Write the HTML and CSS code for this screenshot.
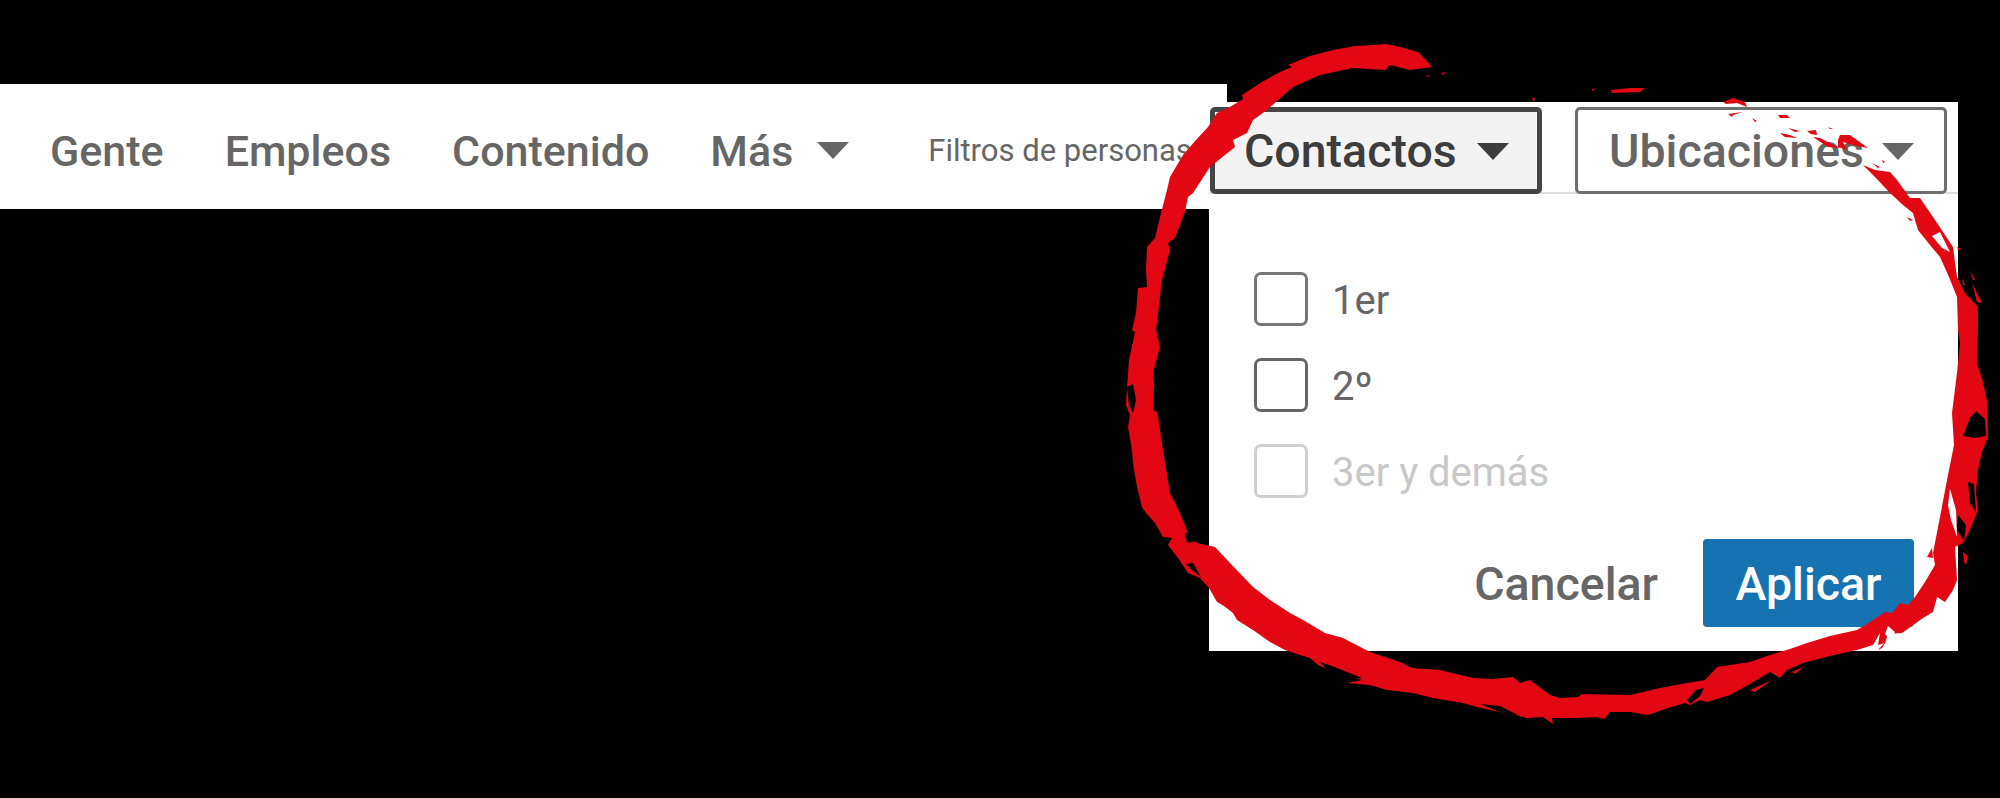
FILE: index.html
```html
<!DOCTYPE html>
<html lang="es">
<head>
<meta charset="utf-8">
<title>Filtros de personas</title>
<link rel="stylesheet" href="styles.css">
</head>
<body>
<main class="stage">
  <nav class="bar">
    <a class="tab">Gente</a>
    <a class="tab">Empleos</a>
    <a class="tab">Contenido</a>
    <a class="tab tab-more">Más <span class="caret caret-tab"></span></a>
    <span class="filter-label">Filtros de personas</span>
  </nav>
  <section class="panel">
    <div class="panel-head">
      <button class="pill pill-active">Contactos <span class="caret caret-dark"></span></button>
      <button class="pill pill-plain">Ubicaciones <span class="caret caret-tab"></span></button>
    </div>
    <div class="options">
      <div class="option"><span class="box"></span><span class="option-text">1er</span></div>
      <div class="option"><span class="box box-strong"></span><span class="option-text">2º</span></div>
      <div class="option option-off"><span class="box"></span><span class="option-text">3er y demás</span></div>
    </div>
    <div class="actions">
      <button class="cancel">Cancelar</button>
      <button class="apply">Aplicar</button>
    </div>
  </section>
  <svg class="brush" viewBox="0 0 2000 798" aria-hidden="true">
    <path class="ink" d="M1432 67 L1426 60 L1418 52 L1400 47 L1387 44 L1373 45 L1355 46 L1333 50 L1310 56 L1288 65 L1292 67 L1280 72 L1262 82 L1242 95 L1243 99 L1230 107 L1217 113 L1208 127 L1196 140 L1183 155 L1170 177 L1167 190 L1160 217 L1155 238 L1147 247 L1146 270 L1147 287 L1138 288 L1136 313 L1132 330 L1135 332 L1129 360 L1127 387 L1126 405 L1130 415 L1128 427 L1132 450 L1133 463 L1137 487 L1142 507 L1146 513 L1155 523 L1163 537 L1172 538 L1168 545 L1178 558 L1188 573 L1200 578 L1209 588 L1217 602 L1224 606 L1233 613 L1237 620 L1253 630 L1270 642 L1285 650 L1300 655 L1310 658 L1318 665 L1333 672 L1348 676 L1362 680 L1347 683 L1370 685 L1387 690 L1413 693 L1433 698 L1463 703 L1477 707 L1490 710 L1510 714 L1527 718 L1543 717 L1553 724 L1552 718 L1575 718 L1597 717 L1604 719 L1610 712 L1630 712 L1648 715 L1668 708 L1685 703 L1690 705 L1700 700 L1707 702 L1730 695 L1750 684 L1770 672 L1780 678 L1787 670 L1803 663 L1830 656 L1857 650 L1873 645 L1880 633 L1878 645 L1885 643 L1888 634 L1902 633 L1923 618 L1933 612 L1937 597 L1945 602 L1953 590 L1957 580 L1955 547 L1963 543 L1970 530 L1978 510 L1976 492 L1978 470 L1982 452 L1988 437 L1987 400 L1983 382 L1977 363 L1978 330 L1978 307 L1965 293 L1957 277 L1953 247 L1945 235 L1933 217 L1920 198 L1910 198 L1897 180 L1890 172 L1875 170 L1863 165 L1876 178 L1890 193 L1903 205 L1913 213 L1918 230 L1930 245 L1940 257 L1949 277 L1957 297 L1958 330 L1960 343 L1957 373 L1952 413 L1954 445 L1947 480 L1940 517 L1933 553 L1935 565 L1925 582 L1915 597 L1908 605 L1900 603 L1892 613 L1885 612 L1870 622 L1857 630 L1830 636 L1807 643 L1790 649 L1770 655 L1750 662 L1717 667 L1705 680 L1687 683 L1660 688 L1630 695 L1582 694 L1578 697 L1560 698 L1550 695 L1530 680 L1520 683 L1513 677 L1493 679 L1473 678 L1440 670 L1412 668 L1400 662 L1370 652 L1343 638 L1325 633 L1303 620 L1290 613 L1270 600 L1253 587 L1230 563 L1215 547 L1197 543 L1188 533 L1180 513 L1170 493 L1163 450 L1157 410 L1153 373 L1160 347 L1156 330 L1162 280 L1170 250 L1168 243 L1175 238 L1185 212 L1188 197 L1193 193 L1210 167 L1235 147 L1233 140 L1247 133 L1253 120 L1267 110 L1293 87 L1320 75 L1353 68 L1385 70 L1390 65 L1410 70 Z"/>
    <path class="ink" d="M1840 135 L1850 135 L1868 148 L1856 146 L1843 142 L1847 150 L1838 147 L1838 140Z M1813 137 L1820 138 L1840 148 L1828 147Z M1723 102 L1733 98 L1745 102 L1747 107 L1737 103 L1726 104Z M1728 114 L1743 112 L1733 115 L1732 117Z M1778 115 L1787 115 L1790 118 L1780 118Z M1752 118 L1757 121 L1755 122Z M1780 133 L1790 135 L1797 138 L1785 137Z M1788 128 L1800 131 L1795 132Z M1807 131 L1816 130 L1817 135 L1811 134Z M1828 127 L1833 129 L1830 129Z M1872 163 L1880 167 L1878 168Z M1882 160 L1885 162 L1883 163Z M1907 217 L1913 220 L1910 221Z M1957 247 L1962 249 L1958 250Z M1970 270 L1975 280 L1973 280Z M1972 283 L1982 303 L1977 302Z M1962 278 L1965 285 L1963 285Z M1611 90 L1630 88 L1645 88 L1640 92 L1612 93Z M1591 90 L1596 88 L1593 91Z M1532 98 L1535 98 L1534 102Z M1441 73 L1446 72 L1443 75Z M1425 75 L1430 76 L1429 77Z M1963 552 L1968 556 L1966 565 L1964 562Z M1927 557 L1932 548 L1933 558Z M1878 650 L1887 640 L1882 648Z M1750 690 L1772 680 L1755 692Z M1792 672 L1805 666 L1795 674Z"/>
    <path class="hole" d="M1963 436 L1970 418 L1976 411 L1985 419 L1986 436 L1975 438Z M1968 482 L1974 484 L1976 512 L1970 503Z M1958 515 L1966 525 L1964 541 L1957 530Z M1127 387 L1133 384 L1136 400 L1133 413 L1129 405Z M1154 387 L1158 385 L1160 392 L1157 412 L1153 410Z M1185 533 L1192 532 L1197 541 L1187 543Z M1186 564 L1193 563 L1201 577 L1192 570Z M1687 700 L1696 690 L1704 688 L1700 696 L1690 704Z M1320 662 L1332 666 L1362 678 L1345 680 L1325 668Z M1480 704 L1500 706 L1520 716 L1500 712Z"/>
    <path class="gap" d="M1950 489 L1956 510 L1957 537 L1951 520 L1948 505Z M1932 236 L1940 232 L1950 252 L1942 248Z M1888 626 L1895 632 L1890 640 L1885 634Z"/>
  </svg>
</main>
</body>
</html>
```

FILE: styles.css
```css
* { box-sizing: border-box; }
html, body { margin: 0; height: 100%; background: #000; }
body { font-family: Roboto, "Liberation Sans", sans-serif; overflow: hidden; }

.stage { position: relative; display: flex; align-items: flex-start; width: 2000px; height: 798px; padding-top: 84px; }

.bar { display: flex; align-items: center; flex: none; width: 1227px; height: 125px; padding: 8px 0 0 50px; background: #fff; white-space: nowrap; overflow: hidden; }
.tab { margin-right: 61px; font-size: 43px; font-weight: 500; color: #666; }
.tab-more { display: flex; align-items: center; gap: 24px; margin-right: 79px; }
.filter-label { font-size: 31px; color: #666; }

.caret { display: inline-block; width: 0; height: 0; border-style: solid; border-color: transparent; border-width: 17px 16px 0; }
.caret-tab { border-top-color: #666; }
.caret-dark { border-top-color: #3d3d3d; }

.panel { position: relative; flex: none; display: flex; flex-direction: column; width: 749px; height: 549px; margin: 18px 0 0 -18px; background: #fff; }
.panel-head { display: flex; gap: 33px; height: 92px; padding: 5px 0 0 1px; border-bottom: 2px solid #ddd; }
.pill { display: flex; align-items: center; justify-content: space-between; height: 87px; padding-top: 2px; background: #fff; font: 500 46.5px Roboto, "Liberation Sans", sans-serif; border-radius: 5px; }
.pill-active { width: 332px; padding-left: 29px; padding-right: 28px; color: #3d3d3d; background: #f3f3f3; border: 5px solid #444; }
.pill-plain { width: 372px; padding-left: 31px; padding-right: 30px; color: #666; border: 3px solid #6e6e6e; }

.options { display: flex; flex-direction: column; gap: 32px; padding: 78px 0 0 45px; }
.option { display: flex; align-items: center; gap: 24px; }
.box { width: 54px; height: 54px; border: 3px solid #777; border-radius: 7px; }
.box-strong { border-color: #666; }
.option-text { padding-top: 3px; font-size: 40px; color: #666; }
.option-off .box { border-color: #d0d0d0; }
.option-off .option-text { color: #c8c8c8; }

.actions { display: flex; align-items: center; justify-content: flex-end; gap: 45px; padding: 41px 44px 0 0; }
.cancel { padding: 2px 0 0; border: 0; background: none; font: 500 46.5px Roboto, "Liberation Sans", sans-serif; color: #666; }
.apply { width: 211px; height: 88px; padding-top: 2px; border: 0; border-radius: 4px; background: #1673b1; color: #fff; font: 500 46.5px Roboto, "Liberation Sans", sans-serif; }

.brush { position: absolute; inset: 0; width: 2000px; height: 798px; pointer-events: none; }
.ink { fill: #e30613; }
.hole { fill: #000; }
.gap { fill: #fff; }
```
